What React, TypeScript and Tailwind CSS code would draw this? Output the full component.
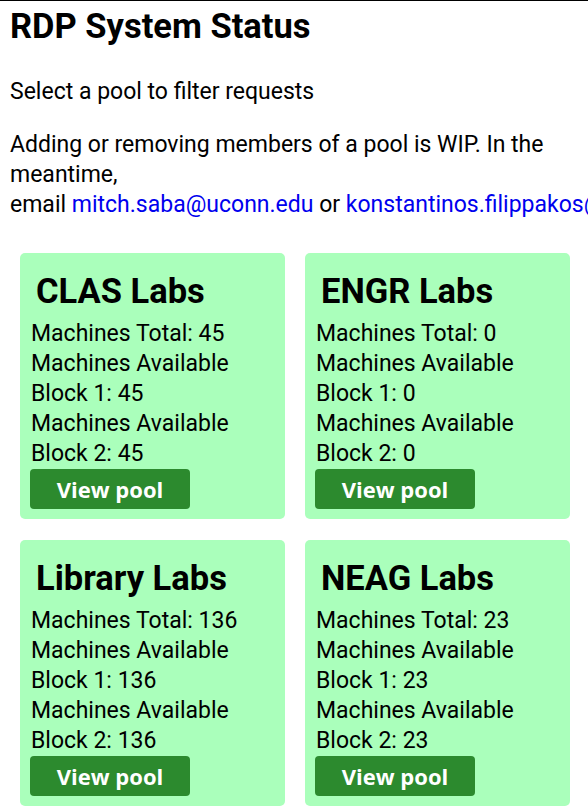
import React from "react";

const pools = [
  { name: "CLAS Labs", total: 45, b1: 45, b2: 45 },
  { name: "ENGR Labs", total: 0, b1: 0, b2: 0 },
  { name: "Library Labs", total: 136, b1: 136, b2: 136 },
  { name: "NEAG Labs", total: 23, b1: 23, b2: 23 },
];

export default function App() {
  return (
    <div className="w-[588px] h-[811px] overflow-hidden bg-white text-black border-t border-black" style={{ fontFamily: "Roboto, sans-serif" }}>
      <div className="px-[10px]">
        <h1 className="text-[34.5px] leading-[40px] font-bold mt-[5px]">RDP System Status</h1>
        <p className="text-[23px] leading-[30px] mt-[31px]">Select a pool to filter requests</p>
        <p className="text-[23px] leading-[30px] mt-[23px] whitespace-nowrap">
          Adding or removing members of a pool is WIP. In the
          <br />
          meantime,
          <br />
          email <a className="text-[#0000ee]">mitch.saba@uconn.edu</a> or{" "}
          <a className="text-[#0000ee]">konstantinos.filippakos@uconn.edu</a>
        </p>
      </div>
      <div className="grid grid-cols-[265px_265px] gap-x-[20px] gap-y-[21px] pl-[20px] mt-[33px]">
        {pools.map((p) => (
          <div key={p.name} className="bg-[#aaffbb] rounded-[5px] h-[266px] pl-[10px] pt-[18px]">
            <h2 className="text-[34.5px] leading-[40px] font-bold pl-[6px]">{p.name}</h2>
            <div className="text-[23px] leading-[30px] mt-[8px] pl-px">
              <div>Machines Total: {p.total}</div>
              <div>Machines Available</div>
              <div>Block 1: {p.b1}</div>
              <div>Machines Available</div>
              <div>Block 2: {p.b2}</div>
            </div>
            <button
              className="w-[160px] h-[40px] rounded-[4px] bg-[#2c8a2e] text-white text-[22px] font-bold"
              style={{ fontFamily: "'Open Sans', sans-serif" }}
            >
              View pool
            </button>
          </div>
        ))}
      </div>
    </div>
  );
}
